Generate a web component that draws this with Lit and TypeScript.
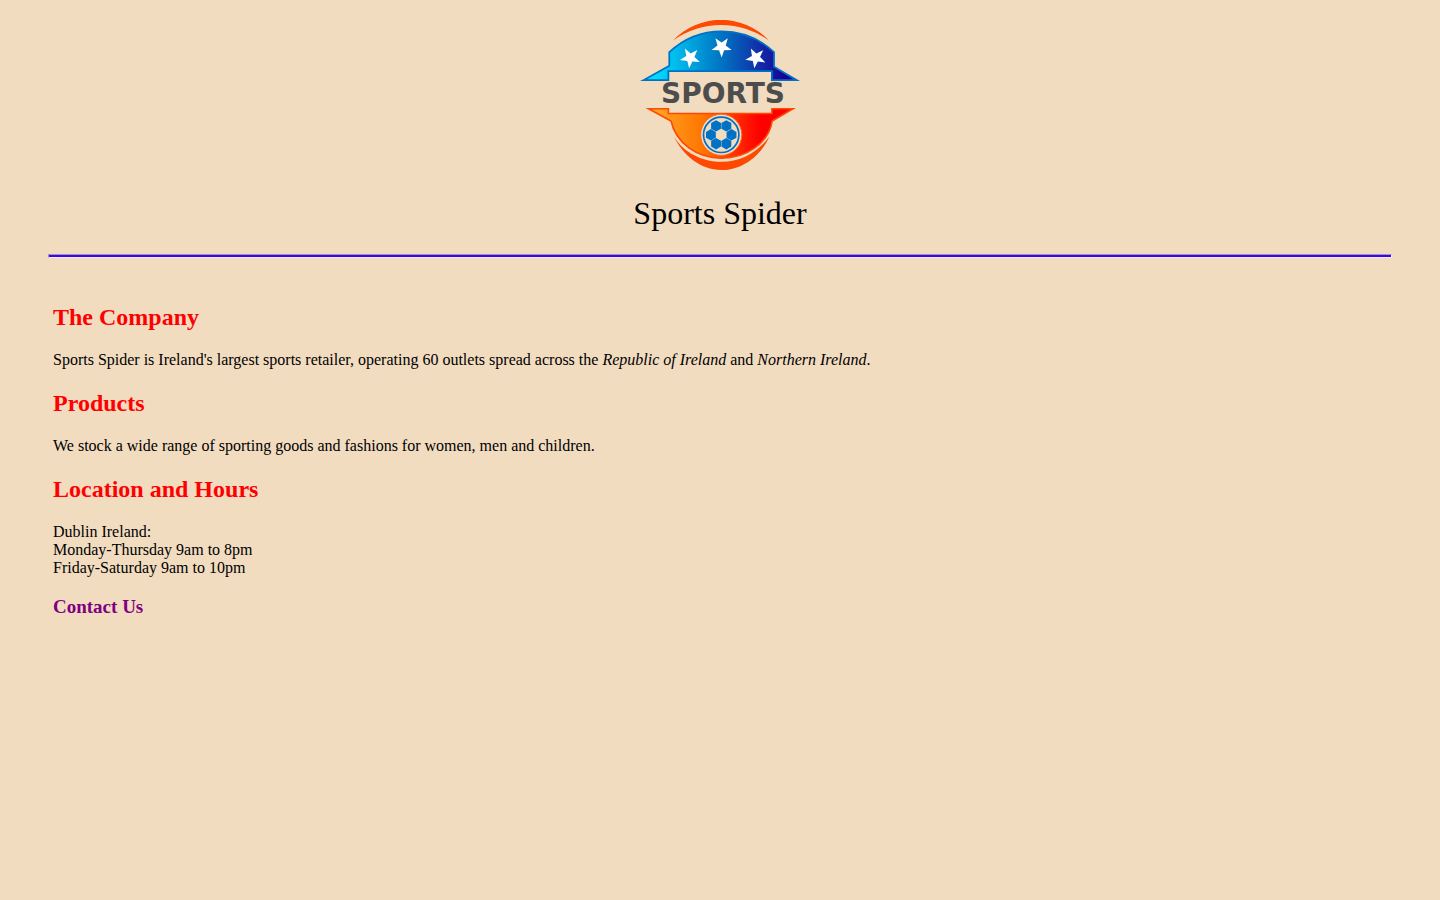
import { LitElement, html, svg, css } from "lit";
import { customElement } from "lit/decorators.js";

const point = (cx: number, cy: number, r: number, deg: number) => {
  const a = (deg * Math.PI) / 180;
  return `${(cx + r * Math.cos(a)).toFixed(2)},${(cy + r * Math.sin(a)).toFixed(2)}`;
};

const star = (cx: number, cy: number, turn: number) =>
  Array.from({ length: 10 }, (_, i) =>
    point(cx, cy, i % 2 ? 4.3 : 10.6, turn - 90 + i * 36)
  ).join(" ");

const hexagon = (cx: number, cy: number, r: number) =>
  Array.from({ length: 6 }, (_, i) => point(cx, cy, r, 30 + i * 60)).join(" ");

const STARS = [
  { x: 50.2, y: 37.8, turn: -30 },
  { x: 81.6, y: 26.8, turn: 36 },
  { x: 115.8, y: 37.8, turn: -28 },
];

const BALL = { x: 81.2, y: 114.8 };

@customElement("sports-logo")
export class SportsLogo extends LitElement {
  static styles = css`
    :host { display: block; }
    .logo { display: block; width: 160px; height: 150px; }
    .word { font: bold 28px "DejaVu Sans", sans-serif; fill: #4d4d4d; text-anchor: middle; }
  `;

  render() {
    return html`
      <svg class="logo" viewBox="0 0 160 150" role="img" aria-label="Sports Spider logo">
        <defs>
          <linearGradient id="sky" gradientUnits="userSpaceOnUse" x1="15" y1="0" x2="145" y2="0">
            <stop offset="0" stop-color="#00dcff" />
            <stop offset="0.5" stop-color="#0076c4" />
            <stop offset="1" stop-color="#1b0096" />
          </linearGradient>
          <linearGradient id="fire" gradientUnits="userSpaceOnUse" x1="5" y1="0" x2="120" y2="0">
            <stop offset="0" stop-color="#ffb02e" />
            <stop offset="0.5" stop-color="#ff7600" />
            <stop offset="0.88" stop-color="#ff1800" />
            <stop offset="1" stop-color="#ff0000" />
          </linearGradient>
        </defs>
        <path fill="#ff4800" d="M33 20.5A66 66 0 0 1 129 20.5A82 82 0 0 0 33 20.5Z" />
        <path fill="url(#sky)" stroke="#0072c6" stroke-width="1.8" stroke-miterlimit="8"
          d="M3.4 60.2L29.3 45.8V32.2A76 76 0 0 1 134 32.2V46.8L156.8 60.2H131.9V51.2H28.4V60.2Z" />
        ${STARS.map((s) => svg`<polygon fill="#fff" points=${star(s.x, s.y, s.turn)} />`)}
        <text class="word" x="83" y="83">SPORTS</text>
        <path fill="url(#fire)" stroke="#ff4800" stroke-width="1.6" stroke-miterlimit="8"
          d="M8.6 88.8H28.4V93.5H131.9V88.8H153L132.2 101C129 123 106 138.2 81.5 138.2S36 123 31 101Z" />
        <circle cx=${BALL.x} cy=${BALL.y} r="20.6" fill="#f2dcc0" stroke="#ff6a1a" stroke-width="1" />
        <circle cx=${BALL.x} cy=${BALL.y} r="17.7" fill="none" stroke="#0072c6" stroke-width="1.7" />
        ${[0, 60, 120, 180, 240, 300].map((deg) => {
          const [x, y] = point(BALL.x, BALL.y, 10.3, deg).split(",").map(Number);
          return svg`<polygon fill="#0072c6" points=${hexagon(x, y, 5.7)} />`;
        })}
        <path fill="#ff4800"
          d="M33.8 116.5C43 135 60 150 81.7 150S121 135 129.5 116.5C117 133 101 141.8 81.7 141.8S44 133 33.8 116.5Z" />
      </svg>
    `;
  }
}

@customElement("app-root")
export class AppRoot extends LitElement {
  static styles = css`
    :host {
      display: block;
      box-sizing: border-box;
      min-height: 100vh;
      padding: 20px 48px;
      background: #f2dcc0;
      color: #000;
      font: 16px/18px "Liberation Serif", "Times New Roman", serif;
    }
    .masthead { display: flex; flex-direction: column; align-items: center; gap: 24px; }
    .title { margin: 0; font-size: 32px; line-height: 38px; font-weight: normal; }
    .rule {
      height: 2px;
      margin: 22px 0 0;
      border: 1px solid;
      border-color: #9a9a9a #eeeeee #eeeeee #9a9a9a;
      background: #4400ff;
    }
    .content { padding: 45px 5px; }
    .heading { margin: 0 0 20px; font-size: 24px; line-height: 28px; color: #ff0000; }
    .text { margin: 0 0 20px; }
    .contact { margin: 0; font-size: 19px; line-height: 20px; }
    .link { color: #800080; text-decoration: none; }
  `;

  render() {
    return html`
      <header class="masthead">
        <sports-logo></sports-logo>
        <h1 class="title">Sports Spider</h1>
      </header>
      <hr class="rule" />
      <main class="content">
        <h2 class="heading">The Company</h2>
        <p class="text">
          Sports Spider is Ireland's largest sports retailer, operating 60 outlets spread across the
          <em>Republic of Ireland</em> and <em>Northern Ireland</em>.
        </p>
        <h2 class="heading">Products</h2>
        <p class="text">We stock a wide range of sporting goods and fashions for women, men and children.</p>
        <h2 class="heading">Location and Hours</h2>
        <p class="text">
          Dublin Ireland:<br />
          Monday-Thursday 9am to 8pm<br />
          Friday-Saturday 9am to 10pm
        </p>
        <h3 class="contact"><a class="link" href="#contact">Contact Us</a></h3>
      </main>
    `;
  }
}
